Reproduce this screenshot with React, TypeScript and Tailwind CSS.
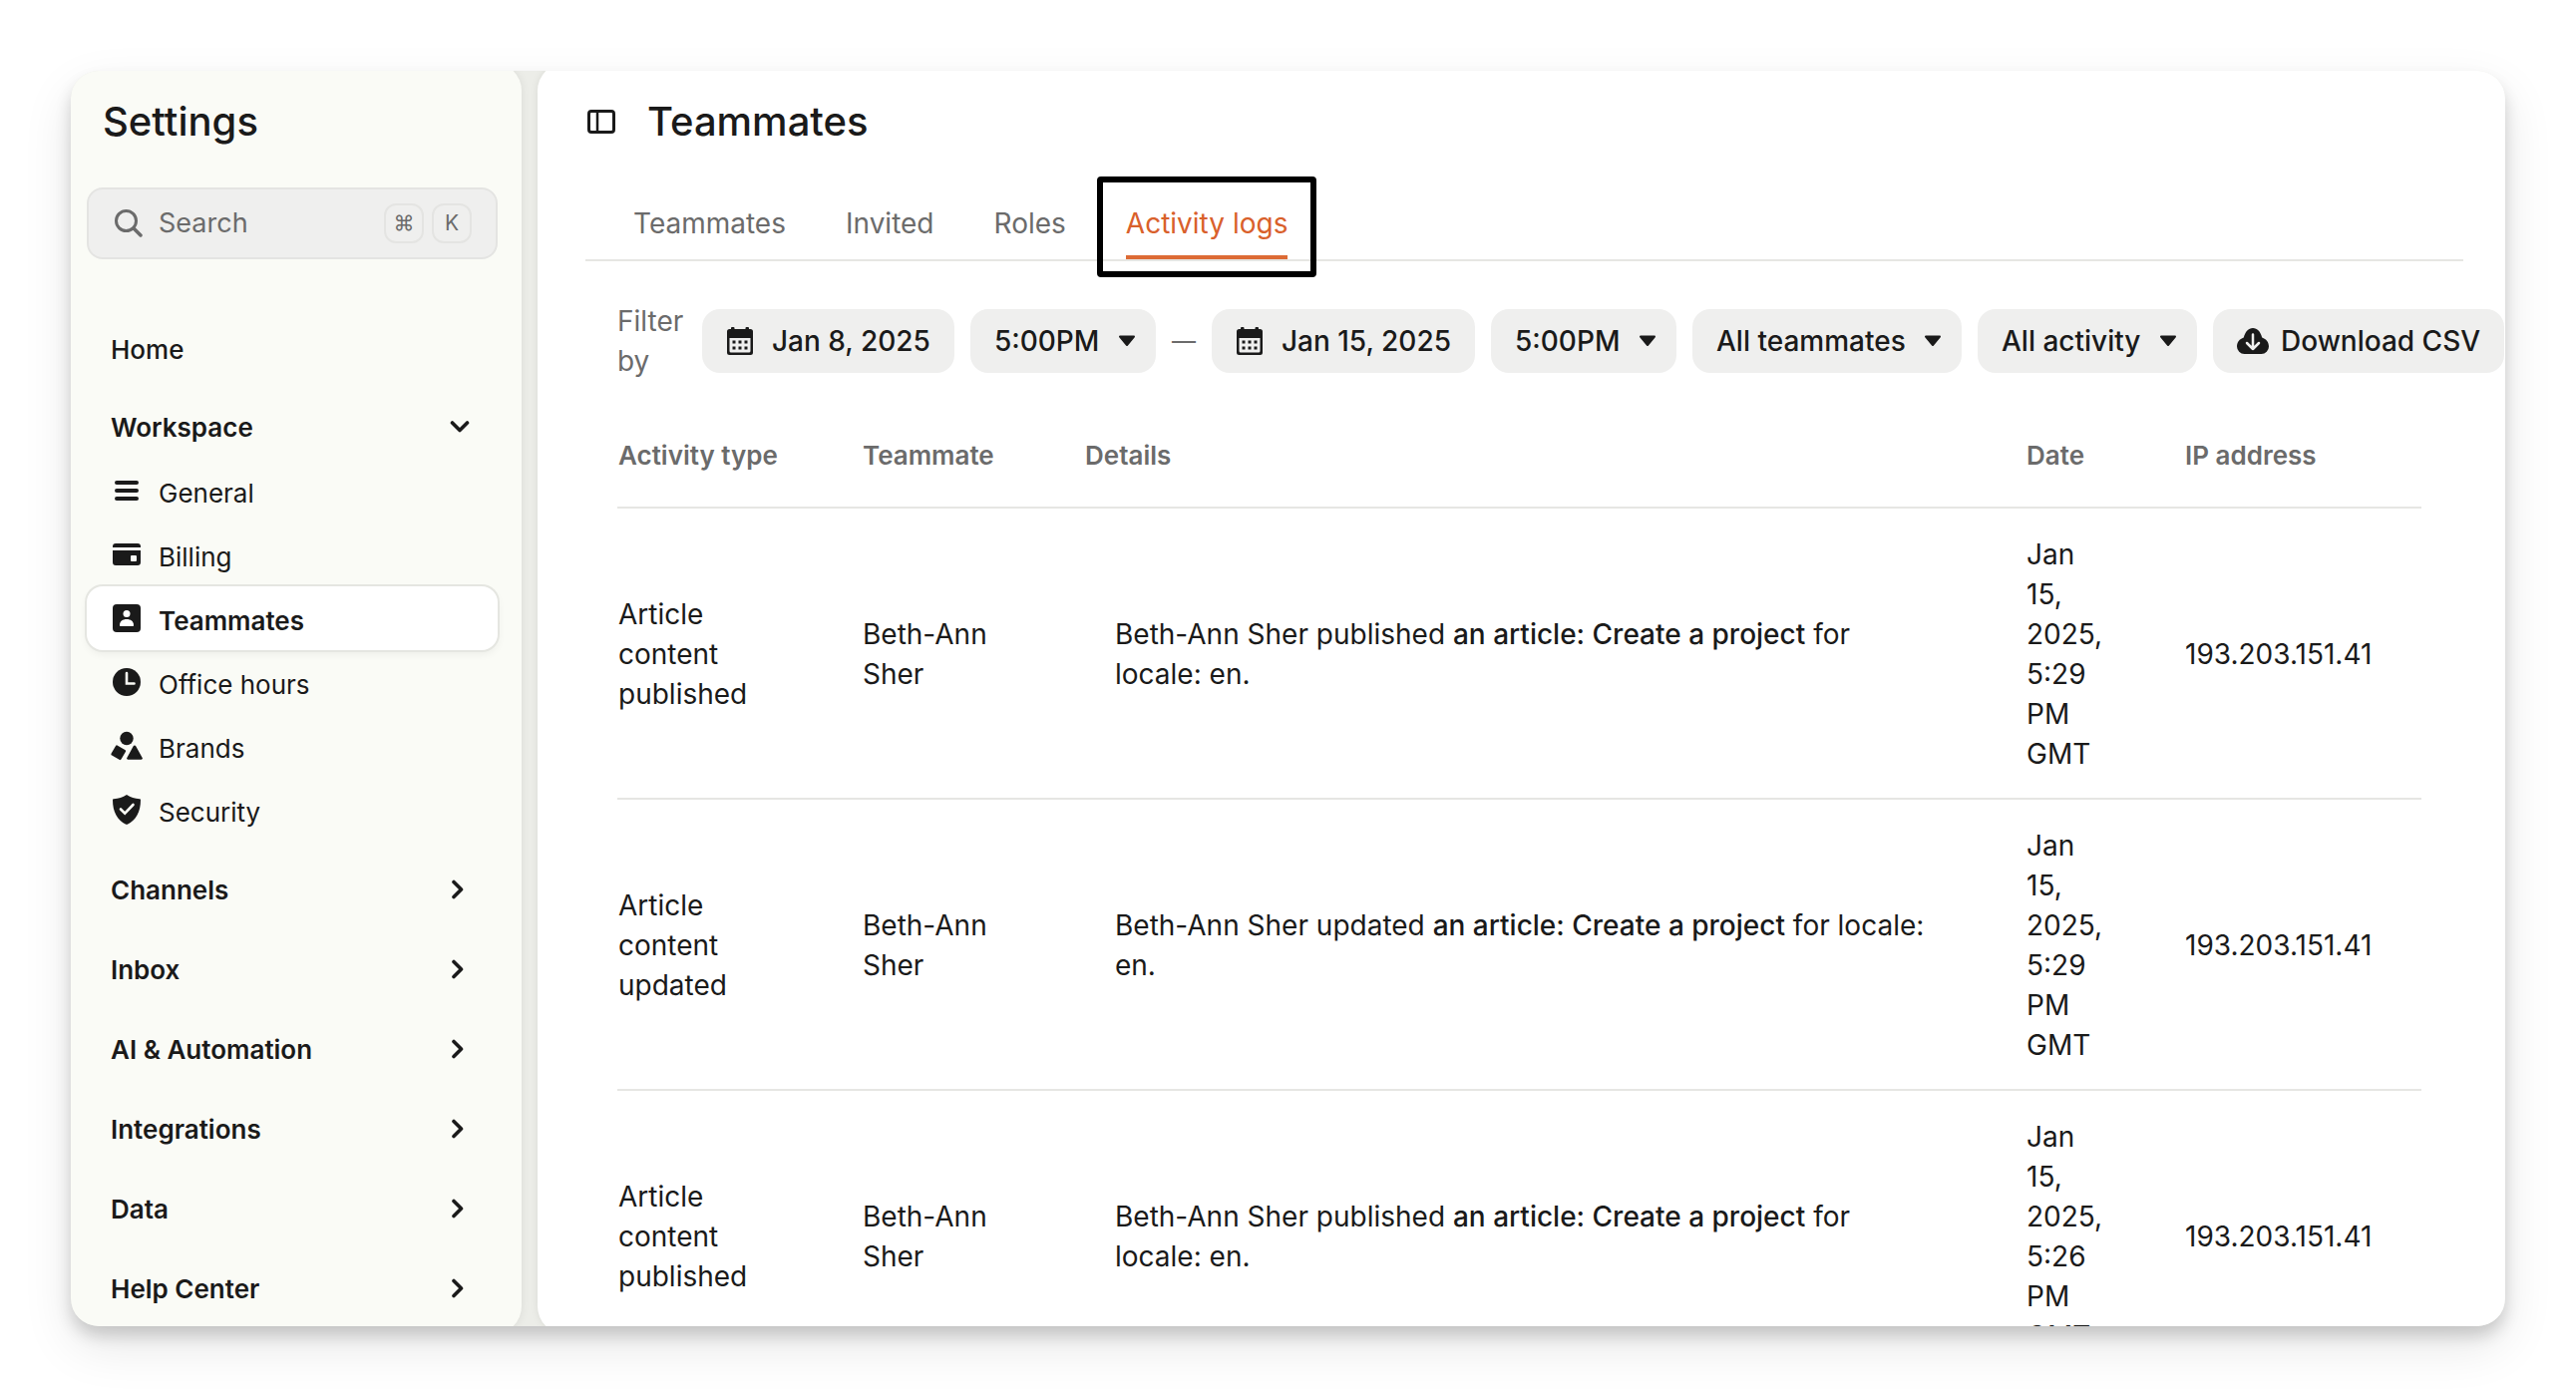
import type { ReactNode } from "react";

const iconProps = {
  viewBox: "0 0 32 32",
  fill: "currentColor",
  className: "size-8 shrink-0",
  "aria-hidden": true,
};

const GeneralIcon = () => (
  <svg {...iconProps}>
    <path
      d="M6 8h20M6 16h20M6 24h20"
      stroke="currentColor"
      strokeWidth="4"
      strokeLinecap="round"
    />
  </svg>
);

const BillingIcon = () => (
  <svg {...iconProps}>
    <path d="M2 9V8a3 3 0 0 1 3-3h22a3 3 0 0 1 3 3v1z" />
    <path
      fillRule="evenodd"
      d="M2 12h28v12a3 3 0 0 1-3 3H5a3 3 0 0 1-3-3zm19 5a1 1 0 0 0-1 1v4a1 1 0 0 0 1 1h4a1 1 0 0 0 1-1v-4a1 1 0 0 0-1-1z"
    />
  </svg>
);

const TeammatesIcon = () => (
  <svg {...iconProps}>
    <rect x="2" y="2" width="28" height="28" rx="4" />
    <circle cx="16" cy="11.5" r="3.5" fill="#fff" />
    <path d="M9 23c0-4 3-6 7-6s7 2 7 6c0 .6-.3 1-1 1H10c-.7 0-1-.4-1-1z" fill="#fff" />
  </svg>
);

const ClockIcon = () => (
  <svg {...iconProps}>
    <circle cx="16" cy="16" r="14" />
    <path d="M16 7v10.5h7.5" fill="none" stroke="#fafbf6" strokeWidth="2.6" strokeLinecap="round" />
  </svg>
);

const BrandsIcon = () => (
  <svg {...iconProps}>
    <circle cx="16" cy="8.5" r="6.7" />
    <rect x="2" y="17" width="11.5" height="11.5" rx="1.5" transform="rotate(30 7.75 22.75)" />
    <path d="M22.7 16.3a1.4 1.4 0 0 1 2.5 0l6.5 11.6c.5.9 0 1.9-1 1.9H17.3c-1 0-1.5-1-1-1.9z" />
  </svg>
);

const SecurityIcon = () => (
  <svg {...iconProps}>
    <path d="M16 1c4 2.5 8 3.9 13 4.2.6 0 1 .5 1 1.1C30 18 25.5 26.5 16.7 30.7a1.6 1.6 0 0 1-1.4 0C6.5 26.5 2 18 2 6.3c0-.6.4-1.1 1-1.1C8 4.9 12 3.5 16 1z" />
    <path d="m10 15.5 4.2 4.2 8.3-8.7" fill="none" stroke="#fafbf6" strokeWidth="2.6" strokeLinecap="round" />
  </svg>
);

const ChevronDown = () => (
  <svg viewBox="0 0 20 20" className="size-5" fill="none" aria-hidden>
    <path d="m2.5 6 7.5 7.5L17.5 6" stroke="currentColor" strokeWidth="3.6" strokeLinecap="round" strokeLinejoin="round" />
  </svg>
);

const ChevronRight = () => (
  <svg viewBox="0 0 20 20" className="size-5" fill="none" aria-hidden>
    <path d="m6 2.5 7.5 7.5L6 17.5" stroke="currentColor" strokeWidth="3.6" strokeLinecap="round" strokeLinejoin="round" />
  </svg>
);

const SearchIcon = () => (
  <svg viewBox="0 0 28 28" className="size-7 shrink-0" fill="none" stroke="currentColor" aria-hidden>
    <circle cx="11.5" cy="11.5" r="10" strokeWidth="3" />
    <path d="m19 19 7 7" strokeWidth="3.5" strokeLinecap="round" />
  </svg>
);

const PanelIcon = () => (
  <svg viewBox="0 0 28 24" className="h-6 w-7" fill="none" stroke="currentColor" aria-hidden>
    <rect x="1.5" y="1.5" width="25" height="21" rx="2.5" strokeWidth="3" />
    <path d="M10 2v20" strokeWidth="2.5" />
  </svg>
);

const CalendarIcon = () => (
  <svg viewBox="0 0 28 28" className="size-7 shrink-0" fill="currentColor" aria-hidden>
    <path
      fillRule="evenodd"
      d="M6 0h1.5a1 1 0 0 1 1 1v1h11V1a1 1 0 0 1 1-1H22a1 1 0 0 1 1 1v1h1.5A2.5 2.5 0 0 1 27 4.5v21a2.5 2.5 0 0 1-2.5 2.5h-21A2.5 2.5 0 0 1 1 25.5v-21A2.5 2.5 0 0 1 3.5 2H5V1a1 1 0 0 1 1-1zM3.5 11v13A1.5 1.5 0 0 0 5 25.5h18a1.5 1.5 0 0 0 1.5-1.5V11z"
    />
    <path d="M6.5 13.5h3v3h-3zm6 0h3v3h-3zm6 0h3v3h-3zm-12 6h3v3h-3zm6 0h3v3h-3zm6 0h3v3h-3z" />
  </svg>
);

const CloudIcon = () => (
  <svg viewBox="0 0 32 28" className="h-7 w-8 shrink-0" aria-hidden>
    <path
      fill="currentColor"
      d="M7.5 27A7.5 7.5 0 0 1 0 19.5c0-4.5 2.6-7.5 6.8-9C8.5 4.5 11.5 1 16 1s7.5 3.5 9.2 9.5c4.2 1.5 6.8 4.500 6.8 9a7.5 7.5 0 0 1-7.5 7.5z"
    />
    <path d="M16 7.5V22m-6-6 6 6 6-6" fill="none" stroke="#efefee" strokeWidth="2.5" strokeLinecap="round" strokeLinejoin="round" />
  </svg>
);

const workspaceItems = [
  { label: "General", Icon: GeneralIcon },
  { label: "Billing", Icon: BillingIcon },
  { label: "Teammates", Icon: TeammatesIcon, active: true },
  { label: "Office hours", Icon: ClockIcon },
  { label: "Brands", Icon: BrandsIcon },
  { label: "Security", Icon: SecurityIcon },
];

const sections = ["Channels", "Inbox", "AI & Automation", "Integrations", "Data", "Help Center"];

const tabs = ["Teammates", "Invited", "Roles", "Activity logs"];

const logs = [
  { action: "published", date: "Jan 15, 2025, 5:29 PM GMT" },
  { action: "updated", date: "Jan 15, 2025, 5:29 PM GMT" },
  { action: "published", date: "Jan 15, 2025, 5:26 PM GMT" },
];

function Sidebar() {
  return (
    <aside className="-my-2 w-[452px] shrink-0 rounded-r-[28px] bg-[#fafbf6] pt-2 pr-6 pl-4 shadow-[0_0_8px_rgba(0,0,0,0.08)]">
      <div className="flex h-[102px] items-center pl-4">
        <h2 className="text-[40px] font-medium">Settings</h2>
      </div>

      {/* Search */}
      <label className="mt-[15px] flex h-[72px] items-center rounded-2xl border-2 border-[#e4e4e2] bg-[#efefee] pr-6 pl-[26px] text-[#6b6b6b]">
        <SearchIcon />
        <input
          type="text"
          aria-label="Search"
          placeholder="Search"
          className="ml-4 w-0 flex-1 bg-transparent text-[27px] outline-none placeholder:text-[#6b6b6b]"
        />
        <span className="flex gap-2">
          <Key>⌘</Key>
          <Key>K</Key>
        </span>
      </label>

      <nav className="mt-[50px] text-[26px]">
        <a href="#home" className="flex h-20 items-center pl-6 font-medium">
          Home
        </a>
        <button type="button" className="mt-2 flex h-15 w-full items-center justify-between pr-7 pl-6 font-semibold">
          Workspace
          <ChevronDown />
        </button>

        <ul className="mt-0.5">
          {workspaceItems.map(({ label, Icon, active }) => (
            <li key={label}>
              <a
                href={`#${label}`}
                className={
                  active
                    ? "flex h-16 items-center gap-4 rounded-2xl bg-white pl-6 font-semibold shadow-[0_4px_8px_rgba(0,0,0,0.06)] ring-2 ring-[#e5e6e1]"
                    : "flex h-16 items-center gap-4 pl-6"
                }
              >
                <Icon />
                <span className="pt-1">{label}</span>
              </a>
            </li>
          ))}
        </ul>

        <div className="mt-2">
          {sections.map((label) => (
            <button
              key={label}
              type="button"
              className="flex h-20 w-full items-center justify-between pr-[30px] pl-6 font-semibold"
            >
              {label}
              <ChevronRight />
            </button>
          ))}
        </div>
      </nav>
    </aside>
  );
}

function Key({ children }: { children: ReactNode }) {
  return (
    <kbd className="flex size-10 items-center justify-center rounded-xl border-2 border-[#e4e4e2] font-[Inter,sans-serif] text-[21px]">
      {children}
    </kbd>
  );
}

function DateButton({ children }: { children: ReactNode }) {
  return (
    <button type="button" className="flex h-16 shrink-0 items-center gap-[18px] rounded-[18px] bg-[#efefee] px-6 font-medium whitespace-nowrap">
      <CalendarIcon />
      {children}
    </button>
  );
}

function Dropdown({ label, value }: { label: string; value: string }) {
  return (
    <div className="relative shrink-0">
      <select
        aria-label={label}
        className="h-16 appearance-none rounded-[18px] bg-[#efefee] pr-14 pl-6 font-medium outline-none"
      >
        <option>{value}</option>
      </select>
      <svg viewBox="0 0 18 12" className="pointer-events-none absolute top-[26px] right-5 h-3 w-[18px]" aria-hidden>
        <path
          d="M2 1.5h14L9 10z"
          fill="currentColor"
          stroke="currentColor"
          strokeWidth="2"
          strokeLinejoin="round"
        />
      </svg>
    </div>
  );
}

function Filters() {
  return (
    <div className="mt-10 flex items-center gap-4 pl-8 text-[28px]">
      <span className="w-[69px] shrink-0 leading-10 text-[#6b6b6b]">Filter by</span>
      <DateButton>Jan 8, 2025</DateButton>
      <Dropdown label="Start time" value="5:00PM" />
      <span className="text-2xl text-[#6b6b6b]">—</span>
      <DateButton>Jan 15, 2025</DateButton>
      <Dropdown label="End time" value="5:00PM" />
      <Dropdown label="Teammate" value="All teammates" />
      <Dropdown label="Activity" value="All activity" />
      <button type="button" className="flex h-16 shrink-0 items-center gap-3 rounded-[18px] bg-[#efefee] px-6 font-medium whitespace-nowrap">
        <CloudIcon />
        Download CSV
      </button>
    </div>
  );
}

function LogTable() {
  return (
    <div className="mt-[22px] pr-[84px] pl-8">
      <table className="w-full table-fixed border-separate border-spacing-0 text-left text-[28px] leading-10">
        <thead className="text-[26px] text-[#6b6b6b]">
          <tr className="h-[106px] *:border-b-2 *:border-[#e6e6e3] *:px-px *:pt-0.5 *:font-semibold">
            <th className="w-[245px]">Activity type</th>
            <th className="w-[223px]">Teammate</th>
            <th>Details</th>
            <th className="w-[159px]">Date</th>
            <th className="w-[238px]">IP address</th>
          </tr>
        </thead>
        <tbody>
          {logs.map(({ action, date }, i) => (
            <tr key={i} className="*:border-b-2 *:border-[#e6e6e3] *:pt-[26px] *:pb-6">
              <td className="pr-20 pl-px">Article content {action}</td>
              <td className="pr-12 pl-px">Beth-Ann Sher</td>
              <td className="pr-[90px] pl-[31px]">
                Beth-Ann Sher {action} <strong className="font-medium">an article: Create a project</strong> for
                locale: en.
              </td>
              <td className="pr-20 pl-px">{date}</td>
              <td className="pl-px">193.203.151.41</td>
            </tr>
          ))}
        </tbody>
      </table>
    </div>
  );
}

export default function App() {
  return (
    <div className="h-screen bg-white p-[71px] font-[Inter,sans-serif] text-[#1a1a1a]">
      <div className="flex h-full gap-4 overflow-hidden rounded-[28px] bg-[#ecede8] shadow-[0_10px_16px_rgba(0,0,0,0.16),0_20px_50px_rgba(0,0,0,0.1)]">
        <Sidebar />

        <main className="-my-2 min-w-0 flex-1 overflow-hidden rounded-l-[28px] bg-white pt-2 pl-12 shadow-[0_0_8px_rgba(0,0,0,0.08)]">
          <header className="flex h-[102px] items-center gap-8 pl-0.5">
            <button type="button" aria-label="Toggle sidebar">
              <PanelIcon />
            </button>
            <h1 className="text-[40px] font-medium">Teammates</h1>
          </header>

          {/* Tabs */}
          <nav className="mr-[42px] flex h-[89px] items-end gap-[60px] border-b-2 border-[#e6e6e3] pl-12 text-[28px]">
            {tabs.map((tab) =>
              tab === "Activity logs" ? (
                <a
                  key={tab}
                  href="#logs"
                  aria-current="page"
                  className="relative flex h-[72px] items-center border-b-4 border-[#dd6b35] pt-1 text-[#d9602b]"
                >
                  {tab}
                  <span className="absolute -inset-x-[29px] -top-[11px] -bottom-[22px] rounded-sm border-6 border-black" />
                </a>
              ) : (
                <a key={tab} href={`#${tab}`} className="flex h-[72px] items-center text-[#6b6b6b]">
                  {tab}
                </a>
              ),
            )}
          </nav>

          <Filters />
          <LogTable />
        </main>
      </div>
    </div>
  );
}
